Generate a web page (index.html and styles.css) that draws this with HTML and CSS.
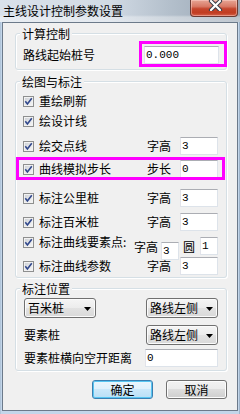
FILE: index.html
```html
<!DOCTYPE html>
<html lang="zh">
<head>
<meta charset="utf-8">
<title>主线设计控制参数设置</title>
<link rel="stylesheet" href="styles.css">
</head>
<body>
<div class="window">
  <div class="titlebar">
    <span class="title">主线设计控制参数设置</span>
    <div class="close">
      <svg width="15" height="11" viewBox="0 0 15 11"><path d="M3 1 L12 10 M12 1 L3 10" stroke="#3a3f48" stroke-width="4.2" stroke-linecap="round" fill="none"/><path d="M3 1 L12 10 M12 1 L3 10" stroke="#ffffff" stroke-width="2.2" stroke-linecap="round" fill="none"/></svg>
    </div>
  </div>
  <div class="client">
    <div class="group g1">
      <span class="legend">计算控制</span>
      <div class="row">
        <span class="lbl">路线起始桩号</span>
        <div class="fld w75">0.000</div>
      </div>
      <div class="mark m1"></div>
    </div>

    <div class="group g2">
      <span class="legend">绘图与标注</span>
      <div class="row mt9">
        <label class="chk"><span class="cb"><svg width="9" height="9" viewBox="0 0 9 9"><path d="M1.3 4.3 L3.4 7 L7.8 1.2" stroke="#31488c" stroke-width="1.6" fill="none"/></svg></span>重绘刷新</label>
      </div>
      <div class="row mt2">
        <label class="chk"><span class="cb"><svg width="9" height="9" viewBox="0 0 9 9"><path d="M1.3 4.3 L3.4 7 L7.8 1.2" stroke="#31488c" stroke-width="1.6" fill="none"/></svg></span>绘设计线</label>
      </div>
      <div class="row mt7">
        <label class="chk"><span class="cb"><svg width="9" height="9" viewBox="0 0 9 9"><path d="M1.3 4.3 L3.4 7 L7.8 1.2" stroke="#31488c" stroke-width="1.6" fill="none"/></svg></span>绘交点线</label>
        <div class="side"><span class="sl">字高</span><div class="fld w38">3</div></div>
      </div>
      <div class="row mt5">
        <label class="chk"><span class="cb"><svg width="9" height="9" viewBox="0 0 9 9"><path d="M1.3 4.3 L3.4 7 L7.8 1.2" stroke="#31488c" stroke-width="1.6" fill="none"/></svg></span>曲线模拟步长</label>
        <div class="side"><span class="sl">步长</span><div class="fld w38">0</div></div>
      </div>
      <div class="row mt11">
        <label class="chk"><span class="cb"><svg width="9" height="9" viewBox="0 0 9 9"><path d="M1.3 4.3 L3.4 7 L7.8 1.2" stroke="#31488c" stroke-width="1.6" fill="none"/></svg></span>标注公里桩</label>
        <div class="side"><span class="sl">字高</span><div class="fld w38">3</div></div>
      </div>
      <div class="row mt6">
        <label class="chk"><span class="cb"><svg width="9" height="9" viewBox="0 0 9 9"><path d="M1.3 4.3 L3.4 7 L7.8 1.2" stroke="#31488c" stroke-width="1.6" fill="none"/></svg></span>标注百米桩</label>
        <div class="side"><span class="sl">字高</span><div class="fld w38">3</div></div>
      </div>
      <div class="row mt2">
        <label class="chk"><span class="cb"><svg width="9" height="9" viewBox="0 0 9 9"><path d="M1.3 4.3 L3.4 7 L7.8 1.2" stroke="#31488c" stroke-width="1.6" fill="none"/></svg></span>标注曲线要素点:</label>
        <div class="side tight"><span class="sl">字高</span><div class="fld w18 g3">3</div><span class="sl g4">圆</span><div class="fld w18 g5">1</div></div>
      </div>
      <div class="row mt6">
        <label class="chk"><span class="cb"><svg width="9" height="9" viewBox="0 0 9 9"><path d="M1.3 4.3 L3.4 7 L7.8 1.2" stroke="#31488c" stroke-width="1.6" fill="none"/></svg></span>标注曲线参数</label>
        <div class="side"><span class="sl">字高</span><div class="fld w38">3</div></div>
      </div>
      <div class="mark m2"></div>
    </div>

    <div class="group g3">
      <span class="legend">标注位置</span>
      <div class="row2 mt9">
        <div class="combo"><span>百米桩</span><svg width="7" height="4" viewBox="0 0 7 4"><path d="M0 0 H7 L3.5 4 Z" fill="#000"/></svg></div>
        <div class="combo"><span>路线左侧</span><svg width="7" height="4" viewBox="0 0 7 4"><path d="M0 0 H7 L3.5 4 Z" fill="#000"/></svg></div>
      </div>
      <div class="row2 mt7">
        <span class="lbl">要素桩</span>
        <div class="combo"><span>路线左侧</span><svg width="7" height="4" viewBox="0 0 7 4"><path d="M0 0 H7 L3.5 4 Z" fill="#000"/></svg></div>
      </div>
      <div class="row2 mt4">
        <span class="lbl">要素桩横向空开距离</span>
        <div class="fld w73">0</div>
      </div>
    </div>

    <div class="buttons">
      <div class="btn default">确定</div>
      <div class="btn">取消</div>
    </div>
  </div>
</div>
</body>
</html>
```
FILE: styles.css
```css
* { box-sizing: border-box; }
html, body { margin: 0; padding: 0; }
body {
  width: 240px;
  height: 414px;
  overflow: hidden;
  font-family: "Noto Sans CJK SC", "Noto Sans", sans-serif;
  font-size: 12px;
  color: #000;
}
.window {
  width: 240px;
  height: 414px;
  background: linear-gradient(to right, #9fb4ca 0, #c3d6ea 1px, #c3d6ea 239px, #9fb4ca 239px);
  display: flex;
  flex-direction: column;
}
.titlebar {
  height: 22px;
  flex: none;
  display: flex;
  justify-content: space-between;
  align-items: flex-start;
  padding-left: 3px;
  background:
    linear-gradient(rgba(255,255,255,0) 0, rgba(255,255,255,0) 15px, rgba(255,255,255,0.35) 17px, rgba(255,255,255,0.4) 22px),
    linear-gradient(to right, #d9e1ea 0%, #d2dbe5 45%, #b4c0cc 70%, #97a4b2 100%);
}
.title {
  line-height: 14px;
  margin-top: 4px;
  white-space: nowrap;
}
.close {
  width: 48px;
  height: 17px;
  margin-right: 2px;
  border: 1px solid #6b3a33;
  border-top: none;
  border-radius: 0 0 4px 4px;
  background: linear-gradient(#e7a595 0%, #d87a66 40%, #c5452c 55%, #c13d22 80%, #d5624a 100%);
  box-shadow: inset 0 0 0 1px rgba(255,220,210,0.45);
  display: flex;
  justify-content: center;
  align-items: flex-start;
}
.close svg { margin-left: 2px; }
.client {
  margin: 0 2px;
  height: 389px;
  flex: none;
  border: 1px solid #6c7a8a;
  background: #f0f0f0;
}
.group {
  position: relative;
  margin-left: 12px;
  margin-right: 10px;
  border: 1px solid #d5dfe5;
  border-radius: 3px;
  box-shadow: inset 1px 1px 0 #ffffff, 1px 1px 0 #ffffff;
  padding-left: 7px;
  padding-right: 7px;
}
.g1 { margin-top: 10px; padding-top: 12px; padding-bottom: 5px; }
.g2 { margin-top: 11px; padding-bottom: 3px; padding-right: 8px; }
.g3 { margin-top: 10px; padding-bottom: 3px; padding-left: 8px; padding-right: 8px; }
.legend {
  position: absolute;
  top: -7px;
  left: 4px;
  padding: 0 2px;
  line-height: 14px;
  background: #f0f0f0;
  white-space: nowrap;
}
.row {
  display: flex;
  align-items: flex-start;
  height: 18px;
}
.g1 .row { justify-content: space-between; align-items: center; }
.row2 {
  display: flex;
  justify-content: space-between;
  align-items: center;
}
.mt2 { margin-top: 2px; }
.mt4 { margin-top: 4px; }
.mt5 { margin-top: 5px; }
.mt6 { margin-top: 6px; }
.mt7 { margin-top: 7px; }
.mt9 { margin-top: 9px; }
.mt11 { margin-top: 11px; }
.lbl { line-height: 14px; white-space: nowrap; }
.chk {
  flex: 1;
  display: flex;
  align-items: center;
  gap: 5px;
  margin-top: 3px;
  line-height: 14px;
  white-space: nowrap;
}
.cb {
  width: 11px;
  height: 11px;
  flex: none;
  border: 1px solid #8e8f8f;
  background: linear-gradient(135deg, #c9cdd3 0%, #e6e7e9 55%, #f7f7f7 100%);
  box-shadow: inset 0 0 0 1px #f2f2f2;
  display: flex;
  align-items: center;
  justify-content: center;
}
.side {
  display: flex;
  align-items: center;
  gap: 9px;
  flex: none;
}
.side.tight { gap: 0; }
.sl { line-height: 18px; padding-top: 1px; white-space: nowrap; }
.g3 { }
.g4 { margin-left: 4px; }
.g5 { margin-left: 5px; }
.side.tight .fld.g3 { margin-left: 3px; }
.fld {
  height: 18px;
  background: #fff;
  border: 1px solid #dde3ea;
  border-top-color: #abadb3;
  border-left-color: #e2e3ea;
  padding-left: 1px;
  font-family: "Liberation Mono", "DejaVu Sans Mono", monospace;
  font-size: 11px;
  line-height: 16px;
  flex: none;
}
.w75 { width: 75px; }
.w73 { width: 73px; }
.w38 { width: 38px; }
.w18 { width: 18px; }
.combo {
  width: 72px;
  height: 20px;
  border: 1px solid #707070;
  border-radius: 3px;
  background: linear-gradient(#f5f5f5 0%, #ececec 50%, #e2e2e2 50%, #d9d9d9 100%);
  box-shadow: inset 0 0 0 1px #fbfbfb;
  display: flex;
  align-items: center;
  justify-content: space-between;
  padding: 0 4px 0 3px;
  line-height: 14px;
  white-space: nowrap;
}
.combo svg { flex: none; margin-top: 1px; }
.buttons {
  display: flex;
  justify-content: flex-end;
  gap: 13px;
  margin-top: 9px;
  margin-right: 10px;
}
.btn {
  width: 61px;
  height: 19px;
  border: 1px solid #707070;
  border-radius: 3px;
  background: linear-gradient(#f2f2f2 0%, #ebebeb 50%, #dddddd 50%, #cfcfcf 100%);
  box-shadow: inset 0 0 0 1px #fcfcfc;
  text-align: center;
  line-height: 17px;
}
.btn.default {
  border-color: #3c7fb1;
  background: linear-gradient(#eaf6fd 0%, #e0f1fc 50%, #cbe8fa 50%, #b9dff6 100%);
  box-shadow: inset 0 0 0 1px #58c6f2;
}
.mark {
  position: absolute;
  border: 3px solid #ff00ff;
  pointer-events: none;
}
.m1 { left: 123px; top: 7px; width: 88px; height: 26px; }
.m2 { left: 0; top: 75px; width: 209px; height: 23px; }
```
